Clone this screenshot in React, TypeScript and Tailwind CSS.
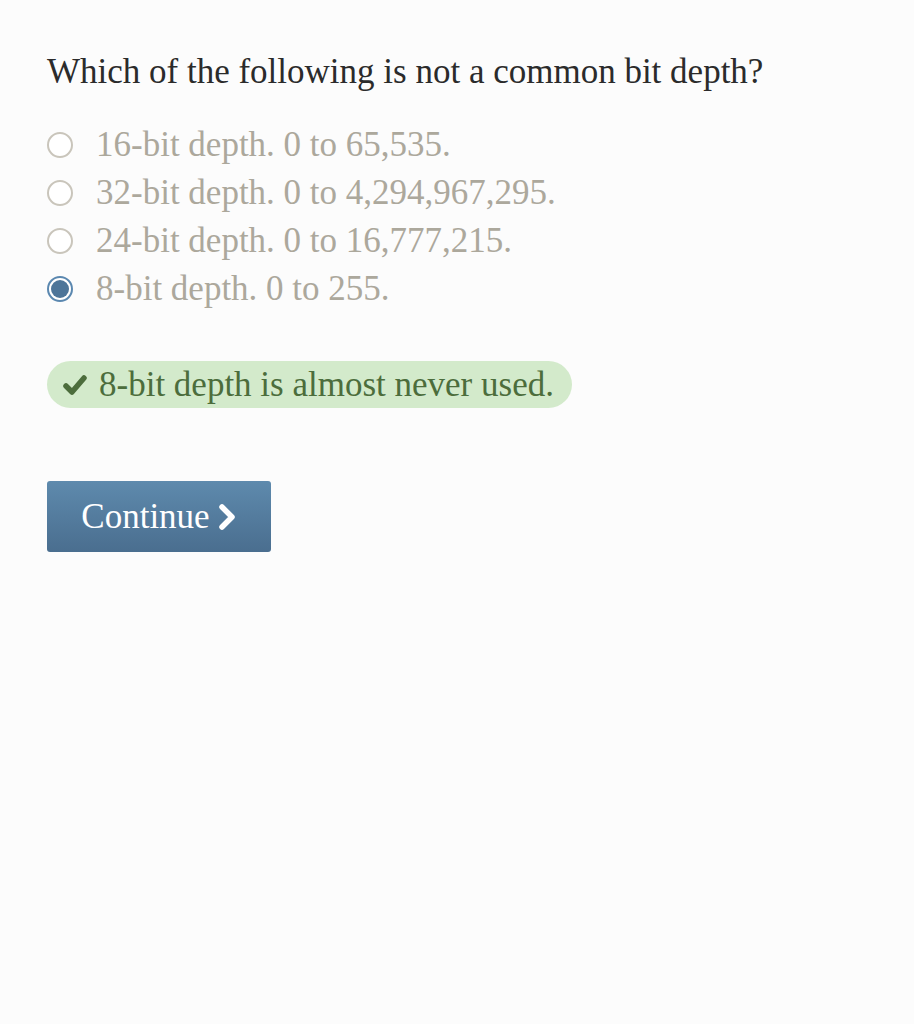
const options = [
  "16-bit depth. 0 to 65,535.",
  "32-bit depth. 0 to 4,294,967,295.",
  "24-bit depth. 0 to 16,777,215.",
  "8-bit depth. 0 to 255.",
];

function CheckIcon() {
  return (
    <svg viewBox="0 0 26 22" className="h-[22px] w-[26px]" fill="none">
      <polyline
        points="4,12 10,18 22,4"
        stroke="#4c6d3c"
        strokeWidth="5.5"
        strokeLinecap="round"
        strokeLinejoin="round"
      />
    </svg>
  );
}

function ChevronIcon() {
  return (
    <svg viewBox="0 0 19 28" className="h-[28px] w-[19px]" fill="none">
      <polyline
        points="4,4 14,14 4,24"
        stroke="white"
        strokeWidth="5.5"
        strokeLinecap="round"
        strokeLinejoin="round"
      />
    </svg>
  );
}

export default function App() {
  const selected = 3;
  return (
    <div className="min-h-screen bg-[#fcfcfc] px-[47px] pt-[52px] font-['Liberation_Serif',Georgia,serif]">
      <h2 className="text-[35px] leading-[40px] text-[#2b2b2b]">
        Which of the following is not a common bit depth?
      </h2>

      <div className="mt-[29px] flex flex-col">
        {options.map((opt, i) => (
          <label key={opt} className="flex h-[48px] items-center gap-[23px]">
            {i === selected ? (
              <span className="flex h-[26px] w-[26px] items-center justify-center rounded-full border-2 border-[#5b88b0] bg-white">
                <span className="h-[18px] w-[18px] rounded-full bg-[#4d7599]" />
              </span>
            ) : (
              <span className="h-[26px] w-[26px] rounded-full border-2 border-[#c9c5bb] bg-white" />
            )}
            <span className="text-[35px] leading-[40px] text-[#aca89c]">{opt}</span>
          </label>
        ))}
      </div>

      <div className="mt-[48px] inline-flex h-[47px] items-center gap-[11px] rounded-full bg-[#d3eacb] pl-[15px] pr-[18px]">
        <CheckIcon />
        <span className="text-[35px] leading-[40px] text-[#4c6d3c]">8-bit depth is almost never used.</span>
      </div>

      <div className="mt-[73px]">
        <button className="flex h-[71px] w-[224px] items-center justify-center gap-[8px] rounded-[3px] bg-gradient-to-b from-[#5e8aad] to-[#4a6e8f] text-[35px] leading-[40px] text-white">
          Continue
          <ChevronIcon />
        </button>
      </div>
    </div>
  );
}
